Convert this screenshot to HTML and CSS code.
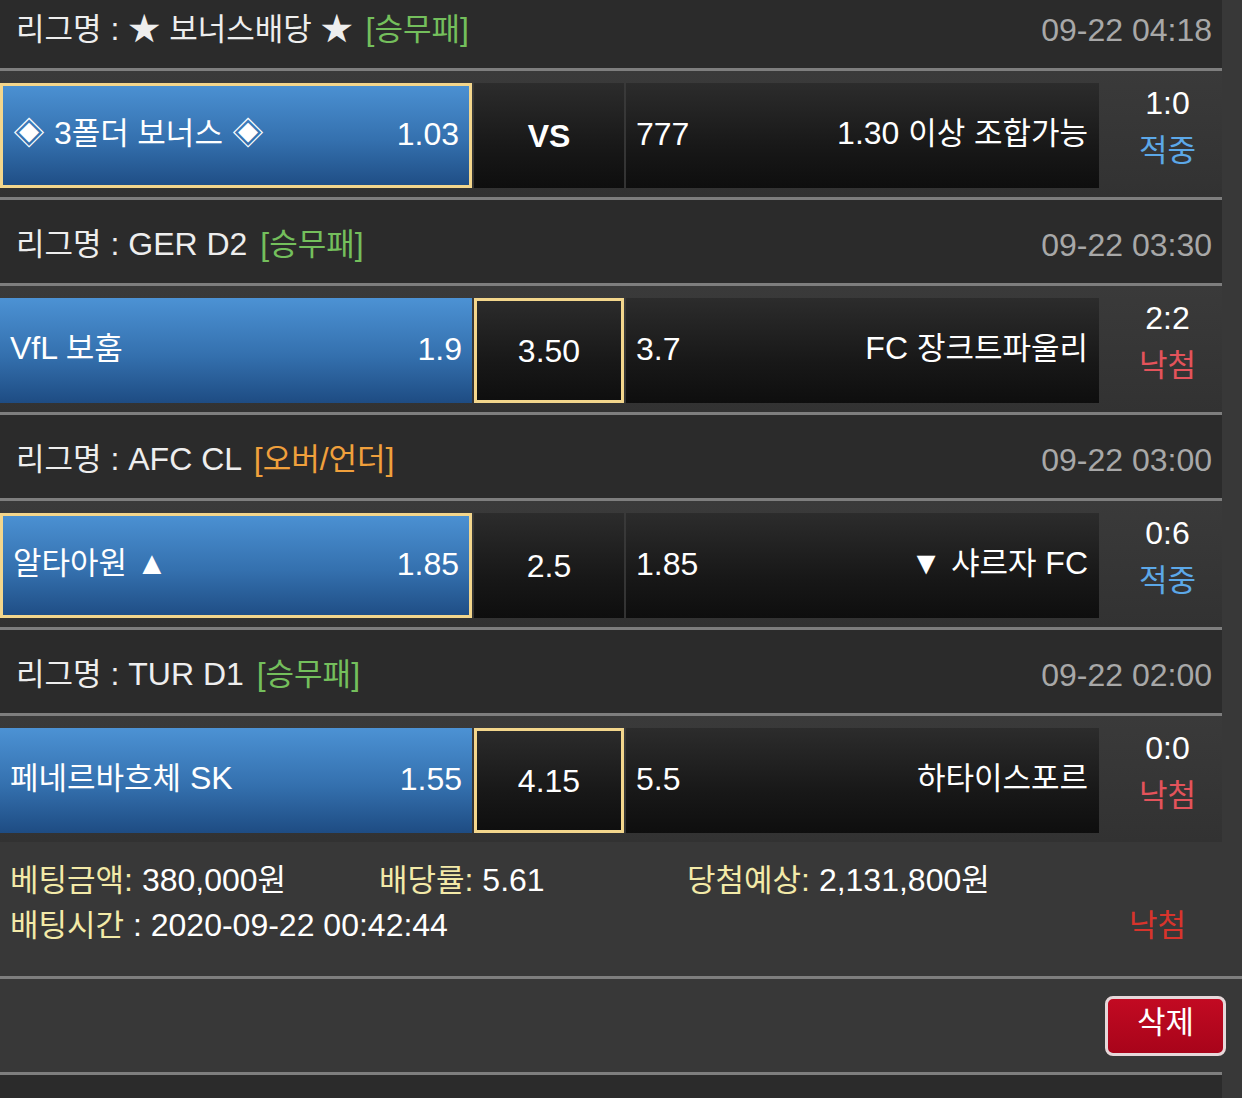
FILE: index.html
```html
<!DOCTYPE html>
<html lang="ko">
<head>
<meta charset="utf-8">
<title>베팅내역</title>
<link rel="stylesheet" href="styles.css">
</head>
<body>
<div class="page">
  <section class="bet">
    <div class="list">
      <div class="league">
        <div class="league-name"><span class="k">리그명</span> : ★ <span class="k">보너스배당</span> ★ <span class="type win">[<span class="k">승무패</span>]</span></div>
        <div class="league-time">09-22 04:18</div>
      </div>
      <div class="match">
        <div class="cell home selected"><span class="team">◈ 3<span class="k">폴더 보너스</span> ◈</span><span class="odds">1.03</span></div>
        <div class="cell draw"><span class="vs">VS</span></div>
        <div class="cell away"><span class="odds">777</span><span class="team">1.30 <span class="k">이상 조합가능</span></span></div>
        <div class="score"><span class="num">1:0</span><span class="res hit k">적중</span></div>
      </div>

      <div class="league">
        <div class="league-name"><span class="k">리그명</span> : GER D2 <span class="type win">[<span class="k">승무패</span>]</span></div>
        <div class="league-time">09-22 03:30</div>
      </div>
      <div class="match">
        <div class="cell home"><span class="team">VfL <span class="k">보훔</span></span><span class="odds">1.9</span></div>
        <div class="cell draw selected"><span class="num">3.50</span></div>
        <div class="cell away"><span class="odds">3.7</span><span class="team">FC <span class="k">장크트파울리</span></span></div>
        <div class="score"><span class="num">2:2</span><span class="res miss k">낙첨</span></div>
      </div>

      <div class="league">
        <div class="league-name"><span class="k">리그명</span> : AFC CL <span class="type ou">[<span class="k">오버</span>/<span class="k">언더</span>]</span></div>
        <div class="league-time">09-22 03:00</div>
      </div>
      <div class="match">
        <div class="cell home selected"><span class="team"><span class="k">알타아원</span> ▲</span><span class="odds">1.85</span></div>
        <div class="cell draw"><span class="num">2.5</span></div>
        <div class="cell away"><span class="odds">1.85</span><span class="team">▼ <span class="k">샤르자</span> FC</span></div>
        <div class="score"><span class="num">0:6</span><span class="res hit k">적중</span></div>
      </div>

      <div class="league">
        <div class="league-name"><span class="k">리그명</span> : TUR D1 <span class="type win">[<span class="k">승무패</span>]</span></div>
        <div class="league-time">09-22 02:00</div>
      </div>
      <div class="match">
        <div class="cell home"><span class="team"><span class="k">페네르바흐체</span> SK</span><span class="odds">1.55</span></div>
        <div class="cell draw selected"><span class="num">4.15</span></div>
        <div class="cell away"><span class="odds">5.5</span><span class="team"><span class="k">하타이스포르</span></span></div>
        <div class="score"><span class="num">0:0</span><span class="res miss k">낙첨</span></div>
      </div>
    </div>

    <div class="summary">
      <div class="sum-row">
        <div class="sum-item"><span class="label"><span class="k">베팅금액</span>:</span> 380,000<span class="k">원</span></div>
        <div class="sum-item"><span class="label"><span class="k">배당률</span>:</span> 5.61</div>
        <div class="sum-item"><span class="label"><span class="k">당첨예상</span>:</span> 2,131,800<span class="k">원</span></div>
      </div>
      <div class="sum-row2">
        <div class="sum-item"><span class="label"><span class="k">배팅시간</span></span> : 2020-09-22 00:42:44</div>
        <div class="bet-result k">낙첨</div>
      </div>
    </div>

    <div class="actions">
      <button class="btn-delete" type="button"><span class="k">삭제</span></button>
    </div>
  </section>

  <section class="bet">
    <div class="list">
      <div class="league"></div>
    </div>
  </section>
</div>
</body>
</html>
```

FILE: styles.css
```css
* {
  box-sizing: border-box;
}

html,
body {
  margin: 0;
  padding: 0;
}

body {
  width: 1242px;
  height: 1098px;
  overflow: hidden;
  background: #383838;
  color: #ffffff;
  font-family: "Liberation Sans", "Noto Sans CJK KR", sans-serif;
  font-size: 32px;
  line-height: 40px;
}

.k {
  font-size: 31px;
}

.page {
  margin-top: -18px;
}

.list {
  width: 1222px;
  border-top: 3px solid #7e7e7e;
}

.league {
  height: 86px;
  background: #2b2b2b;
  border-bottom: 3px solid #7e7e7e;
  display: flex;
  align-items: center;
  justify-content: space-between;
  padding: 6px 10px 0 16px;
  color: #eeeeee;
}

.league-time {
  color: #a8a8a8;
}

.type {
  margin-left: 4px;
}

.type.win {
  color: #74bf5c;
}

.type.ou {
  color: #f0a03c;
}

.match {
  height: 129px;
  display: grid;
  grid-template-columns: 472px 150px 473px 1fr;
  column-gap: 2px;
  padding: 12px 0 9px;
  border-bottom: 3px solid #7e7e7e;
  background: linear-gradient(#3a3a3a, #323232);
}

.match:last-child {
  border-bottom: none;
  height: 126px;
}

.cell {
  display: flex;
  align-items: center;
  justify-content: space-between;
  padding: 0 10px 4px;
  white-space: nowrap;
  background-origin: border-box;
}

.home {
  background-image: linear-gradient(#4c92d4, #3470ae 55%, #1e4c83);
}

.draw,
.away {
  background-image: linear-gradient(#2c2c2c, #181818 60%, #0e0e0e);
}

.draw {
  justify-content: center;
  padding-bottom: 0;
}

.away {
  padding-right: 11px;
}

.selected {
  border: 3px solid #f3d68c;
}

.vs {
  font-weight: bold;
}

.score {
  display: flex;
  flex-direction: column;
  align-items: center;
  padding-left: 12px;
  margin-top: -3px;
  line-height: 47px;
}

.res.hit {
  color: #5ca8e8;
}

.res.miss {
  color: #e4535b;
}

.summary {
  height: 137px;
  border-bottom: 3px solid #7e7e7e;
  padding: 16px 0 0 10px;
  line-height: 45px;
}

.sum-row {
  display: grid;
  grid-template-columns: 369px 308px 1fr;
}

.sum-row2 {
  display: flex;
  justify-content: space-between;
  padding-right: 56px;
}

.label {
  color: #f3eaa8;
}

.bet-result {
  color: #d8342c;
}

.actions {
  height: 93px;
  display: flex;
  align-items: center;
  justify-content: flex-end;
  padding-right: 16px;
}

.btn-delete {
  width: 121px;
  height: 60px;
  border: 3px solid #e6d8da;
  border-radius: 8px;
  background: linear-gradient(#c20a22, #a8041a);
  color: #ffffff;
  font-family: inherit;
  line-height: 40px;
  padding: 0;
  cursor: pointer;
}
```
